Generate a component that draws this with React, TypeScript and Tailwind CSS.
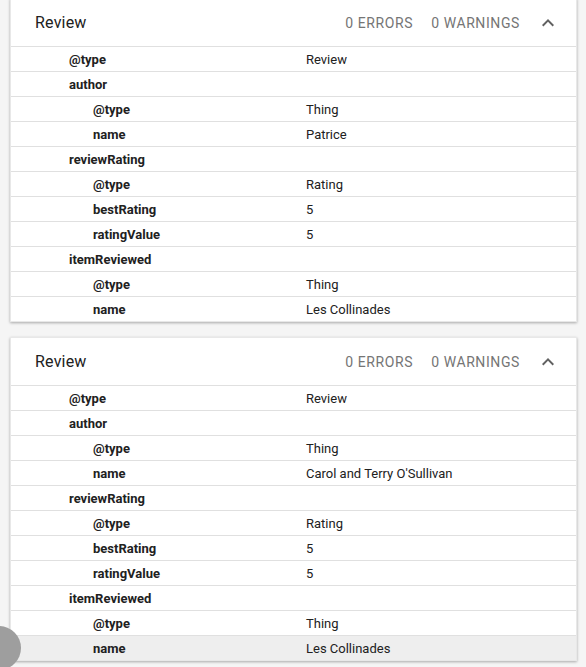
import React from "react";

type Row = { k: string; v?: string; level: 1 | 2; hover?: boolean };

const rows1: Row[] = [
  { k: "@type", v: "Review", level: 1 },
  { k: "author", level: 1 },
  { k: "@type", v: "Thing", level: 2 },
  { k: "name", v: "Patrice", level: 2 },
  { k: "reviewRating", level: 1 },
  { k: "@type", v: "Rating", level: 2 },
  { k: "bestRating", v: "5", level: 2 },
  { k: "ratingValue", v: "5", level: 2 },
  { k: "itemReviewed", level: 1 },
  { k: "@type", v: "Thing", level: 2 },
  { k: "name", v: "Les Collinades", level: 2 },
];

const rows2: Row[] = [
  { k: "@type", v: "Review", level: 1 },
  { k: "author", level: 1 },
  { k: "@type", v: "Thing", level: 2 },
  { k: "name", v: "Carol and Terry O'Sullivan", level: 2 },
  { k: "reviewRating", level: 1 },
  { k: "@type", v: "Rating", level: 2 },
  { k: "bestRating", v: "5", level: 2 },
  { k: "ratingValue", v: "5", level: 2 },
  { k: "itemReviewed", level: 1 },
  { k: "@type", v: "Thing", level: 2 },
  { k: "name", v: "Les Collinades", level: 2, hover: true },
];

function Card({ rows }: { rows: Row[] }) {
  return (
    <div className="bg-white shadow-[0_1px_3px_rgba(0,0,0,0.2),0_1px_2px_rgba(0,0,0,0.12)] border border-[#e8e8e8]">
      <div className="h-[47px] flex items-center pl-6 pr-4">
        <div className="flex-1 text-[16px] text-[#212121] tracking-[0.2px] pt-[1px]">Review</div>
        <div className="text-[14px] text-[#757575] tracking-[0.6px] uppercase pt-[1px]">0 Errors</div>
        <div className="ml-[18px] text-[14px] text-[#757575] tracking-[0.6px] uppercase pt-[1px]">0 Warnings</div>
        <svg className="ml-4 w-6 h-6" viewBox="0 0 24 24" fill="#616161">
          <path d="M7.41 15.41L12 10.83l4.59 4.58L18 14l-6-6-6 6z" />
        </svg>
      </div>
      {rows.map((r, i) => (
        <div
          key={i}
          className={`h-[25px] flex items-center border-t border-[#e0e0e0] text-[13px] pt-[1px] ${r.hover ? "bg-[#eeeeee]" : ""}`}
        >
          <div
            className={`w-[295px] shrink-0 font-bold text-[#212121] ${r.level === 1 ? "pl-[58px]" : "pl-[82px]"}`}
          >
            {r.k}
          </div>
          <div className="text-[#212121]">{r.v ?? ""}</div>
        </div>
      ))}
    </div>
  );
}

export default function App() {
  return (
    <div className="min-h-[667px] h-[667px] overflow-hidden bg-[#f5f5f5] relative" style={{ fontFamily: "Roboto, 'Liberation Sans', sans-serif" }}>
      <div className="pl-[10px] pr-[9px] -mt-[2px] flex flex-col gap-[15px]">
        <Card rows={rows1} />
        <Card rows={rows2} />
      </div>
      <div className="absolute -left-[23px] top-[626px] w-[44px] h-[44px] rounded-full bg-[#9e9e9e]" />
    </div>
  );
}
